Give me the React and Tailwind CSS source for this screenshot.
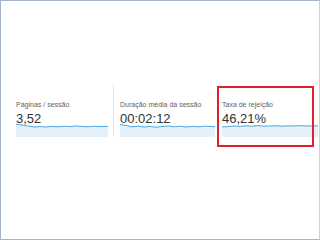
import React from "react";

const metrics = [
  {
    label: "Páginas / sessão",
    value: "3,52",
    width: 92,
    line: "M0 1 L6 2 L12 3 L18 4 L24 3.6 L30 4 L36 3.4 L42 3.8 L48 3.2 L54 3.6 L60 3 L66 3.4 L72 3.8 L78 3.2 L84 3.6 L92 3.4",
  },
  {
    label: "Duração média da sessão",
    value: "00:02:12",
    width: 95,
    line: "M0 1.5 L6 2.5 L12 3.8 L18 3.2 L24 4 L30 3.4 L36 4.2 L42 3.6 L48 3 L54 3.8 L60 3.2 L66 4 L72 3.4 L78 3.8 L84 3.2 L95 3.6",
  },
  {
    label: "Taxa de rejeição",
    value: "46,21%",
    width: 96,
    line: "M0 4 L6 3.6 L12 3 L18 3.4 L24 2.8 L30 3.2 L36 2.6 L42 3.2 L48 3 L54 2.8 L60 3.2 L66 2.8 L72 3 L78 2.6 L84 3 L96 2.8",
  },
];

function Sparkline({ width, line }) {
  return (
    <svg width={width} height="14" viewBox={`0 0 ${width} 14`} className="block">
      <path d={`${line} L${width} 14 L0 14 Z`} fill="#e4f1fa" />
      <path d={line} fill="none" stroke="#4fa8dc" strokeWidth="1" />
    </svg>
  );
}

function Metric({ label, value, width, line }) {
  return (
    <div className="flex flex-col pt-[16px]">
      <div className="text-[7px] leading-[8px] text-[#5f5f5f] whitespace-nowrap">{label}</div>
      <div className="mt-[4px] text-[13px] leading-[12px] text-[#333]">{value}</div>
      <div className="mt-[-2px]">
        <Sparkline width={width} line={line} />
      </div>
    </div>
  );
}

export default function App() {
  return (
    <div
      className="relative w-[320px] h-[240px] overflow-hidden bg-white border border-[#a5b4ca] border-r-[#c9d3e0]"
      style={{ fontFamily: '"Liberation Sans", Arial, sans-serif' }}
    >
      <div className="flex mt-[84px] h-[52px]">
        <div className="w-[112px] pl-[15px]">
          <Metric {...metrics[0]} />
        </div>
        <div className="w-px bg-[#e2e2e2]" />
        <div className="w-[103px] pl-[6px]">
          <Metric {...metrics[1]} />
        </div>
        <div className="flex-1 pl-[5px]">
          <Metric {...metrics[2]} />
        </div>
      </div>
      <div className="absolute left-[216px] top-[85px] w-[97px] h-[61px] border-2 border-[#e0202c]" />
    </div>
  );
}
